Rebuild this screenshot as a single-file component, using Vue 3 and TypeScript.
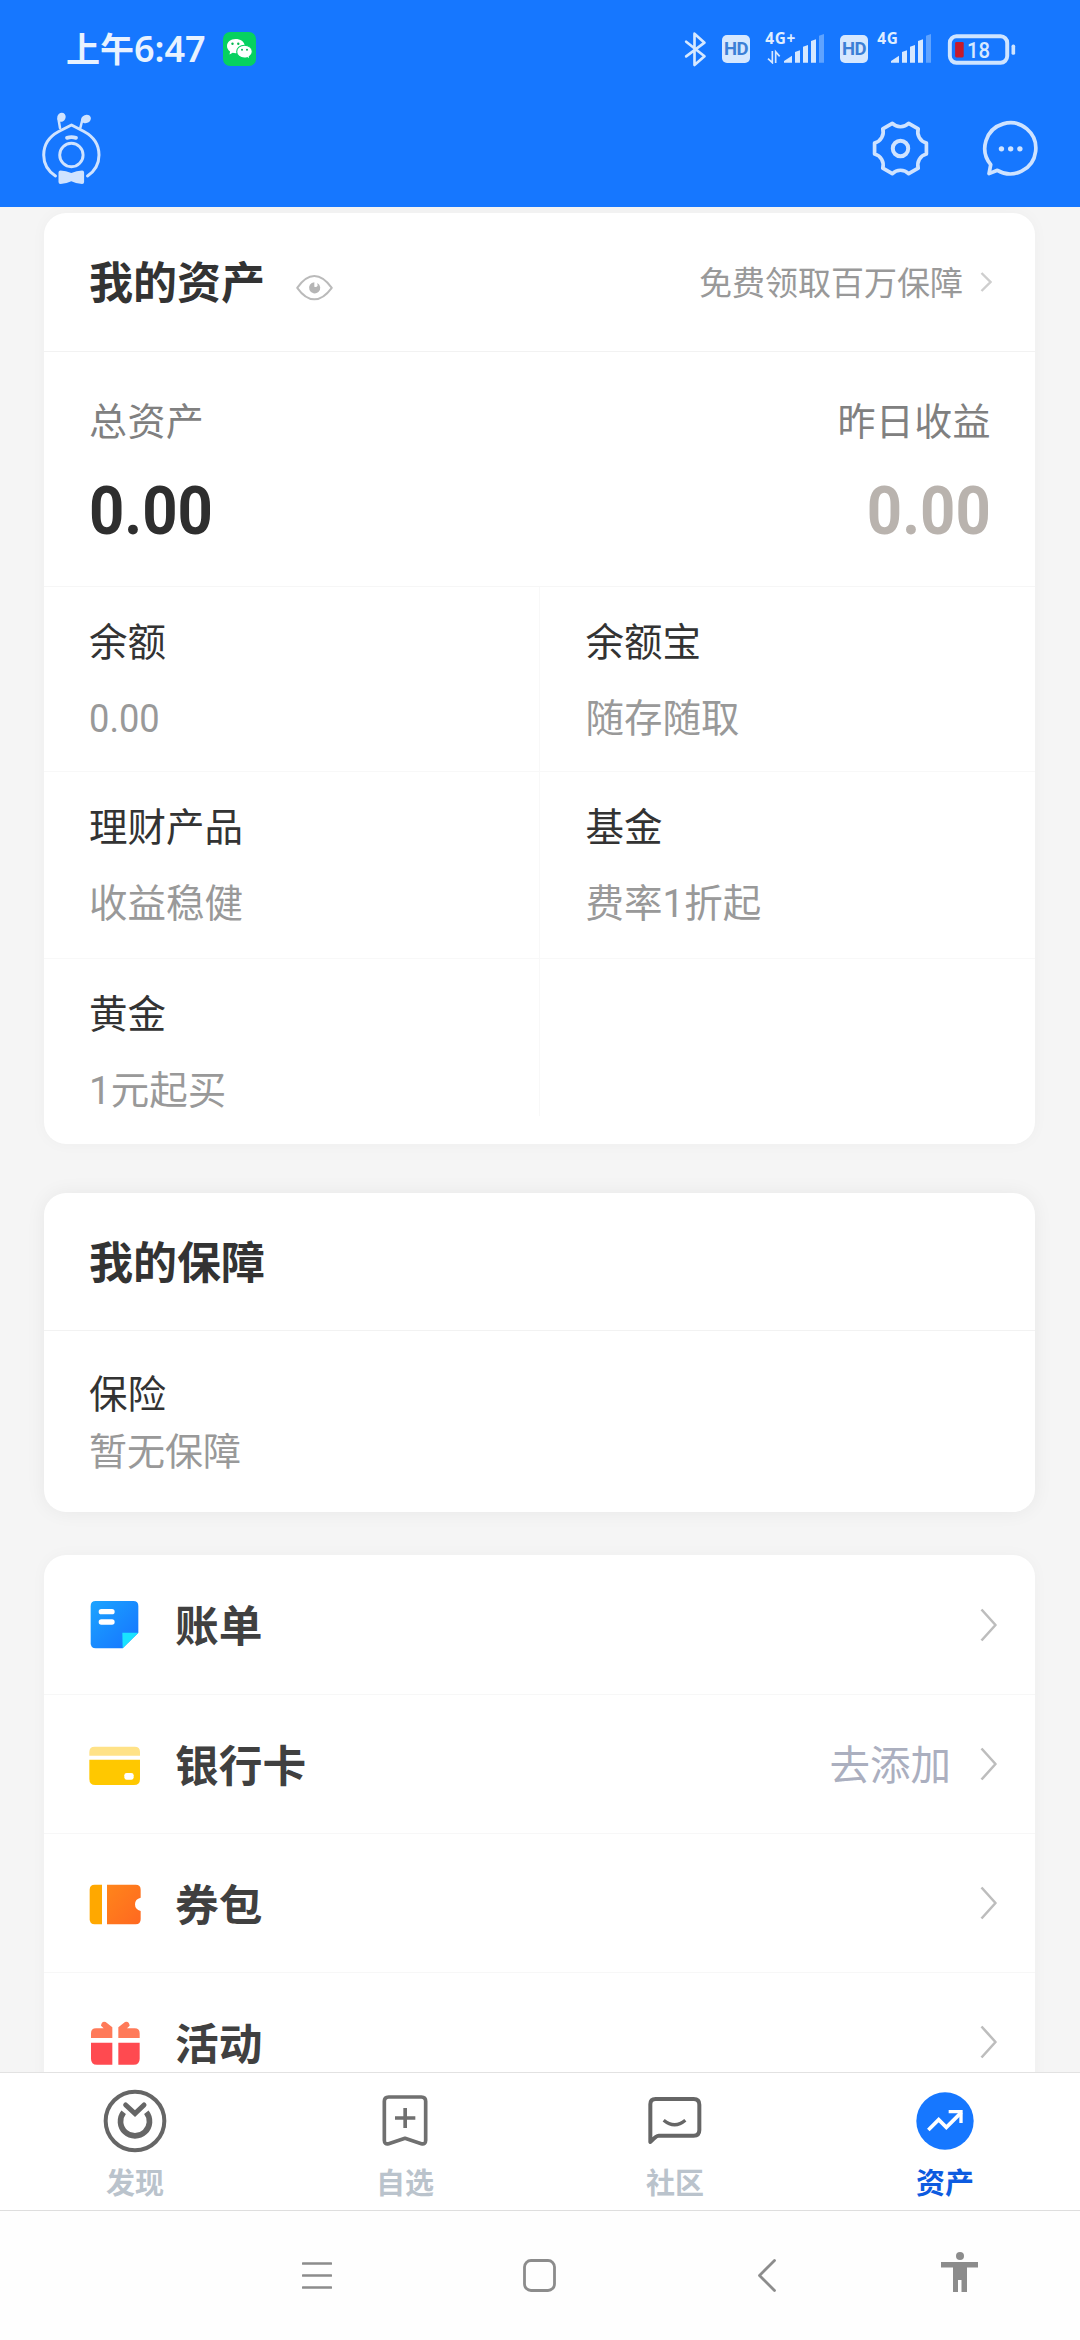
<script setup lang="ts">
interface Asset {
  name: string
  note: string
  numeric?: boolean
}

interface Entry {
  icon: 'bill' | 'card' | 'coupon' | 'gift'
  label: string
  hint?: string
}

interface Tab {
  icon: 'discover' | 'watch' | 'community' | 'assets'
  label: string
  active?: boolean
}

const assetRows: Asset[][] = [
  [{ name: '余额', note: '0.00', numeric: true }, { name: '余额宝', note: '随存随取' }],
  [{ name: '理财产品', note: '收益稳健' }, { name: '基金', note: '费率1折起' }],
  [{ name: '黄金', note: '1元起买' }],
]

const entries: Entry[] = [
  { icon: 'bill', label: '账单' },
  { icon: 'card', label: '银行卡', hint: '去添加' },
  { icon: 'coupon', label: '券包' },
  { icon: 'gift', label: '活动' },
]

const tabs: Tab[] = [
  { icon: 'discover', label: '发现' },
  { icon: 'watch', label: '自选' },
  { icon: 'community', label: '社区' },
  { icon: 'assets', label: '资产', active: true },
]
</script>

<template>
  <div class="screen">
    <header class="header">
      <div class="status">
        <div class="clock"><span class="ampm">上午</span><span class="time">6:47</span></div>
        <svg class="wechat" viewBox="0 0 33 34">
          <rect width="33" height="34" rx="7" fill="#06d160" />
          <path d="M12.500 7C7.600 7 4 10.100 4 14c0 2.300 1.200 4.200 3.100 5.500L6.500 22.500l3.200-1.700c3 .8 6.800.3 9.200-1.600C21.200 17.600 22 15.800 21.800 13.500 21.400 9.700 17.500 7 12.500 7z" fill="#fff" />
          <path d="M21.500 13.300c-4.600 0-7.800 2.800-7.800 6.400s3.300 6.400 7.600 6.400c1.100 0 2-.1 2.900-.4l2.600 1.500-.5-2.500c1.800-1.200 3-2.900 3-5 0-3.600-3.300-6.400-7.800-6.400z" fill="#fff" stroke="#06d160" stroke-width="1.100" />
          <circle cx="9.500" cy="11.700" r="1.200" fill="#06b852" /><circle cx="15.300" cy="11.700" r="1.200" fill="#06b852" />
          <circle cx="19" cy="17.800" r="1" fill="#06b852" /><circle cx="24" cy="17.800" r="1" fill="#06b852" />
        </svg>
        <div class="indicators">
          <svg class="bt" viewBox="136 92 68 108">
            <path d="M142 124l55 44-30 26V100l30 27-55 41" fill="none" stroke="#d6e8ff" stroke-width="8" stroke-linecap="round" stroke-linejoin="round" />
          </svg>
          <span class="hd">HD</span>
          <svg class="signal first" viewBox="378 66 180 126">
            <text x="379" y="132" class="net">4G+</text>
            <g fill="none" stroke="#d6e8ff" stroke-width="5"><path d="M400 153v35l-13-12" /><path d="M410 189v-34l12 14" /></g>
            <path d="M435 188v-5l24-16v21zM468 188v-32l15-5v37zM492 188v-48l15-5v53zM516 188v-65l15-5v70z" fill="#d6e8ff" />
            <path d="M540 188v-81l15-5v86z" fill="#5fa3ff" />
          </svg>
          <span class="hd">HD</span>
          <svg class="signal second" viewBox="714 66 165 126">
            <text x="715" y="132" class="net">4G</text>
            <path d="M756 188v-5l24-16v21zM789 188v-32l15-5v37zM813 188v-48l15-5v53zM837 188v-65l15-5v70z" fill="#d6e8ff" />
            <path d="M861 188v-81l15-5v86z" fill="#5fa3ff" />
          </svg>
          <svg class="battery" viewBox="922 100 208 94">
            <rect x="930" y="107" width="174" height="80" rx="20" fill="none" stroke="#cfe4ff" stroke-width="12" />
            <rect x="1117" y="132" width="11" height="31" rx="5" fill="#cfe4ff" />
            <rect x="946" y="124" width="26" height="47" rx="4" fill="#c61a2b" />
            <text x="982" y="173" textLength="70" lengthAdjust="spacingAndGlyphs" class="charge">18</text>
          </svg>
        </div>
      </div>
      <div class="toolbar">
        <svg class="mascot" viewBox="41 112 61 74" fill="none" stroke="#cfe3ff" stroke-linecap="round" stroke-linejoin="round">
          <path d="M55.500 176C47.800 171 43.700 163.500 43.700 155c0-12 7.600-19.500 15-23.500L71.500 125l12.500 6.500c7.400 4 15 11.500 15 23.500 0 8.500-4.100 16-11.500 21" stroke-width="3" />
          <path d="M60 128l-1.500-9M80.300 128l2-8" stroke-width="2.500" />
          <ellipse cx="61.500" cy="117" rx="4.100" ry="4.600" fill="#cfe3ff" stroke="none" transform="rotate(25 61 117)" />
          <ellipse cx="86" cy="119" rx="5" ry="4.100" fill="#cfe3ff" stroke="none" transform="rotate(-20 86 119)" />
          <path d="M67 137.800q4.500-1.200 9 0" stroke-width="3.800" />
          <circle cx="71.400" cy="155" r="11.700" stroke-width="2.900" />
          <path d="M60.500 170.500q5.500 0 10.800 2.600 5.300-2.600 10.800-2.600 2 0 2 2v9.500q0 2-2 2-5 0-10.800-2.800-5.800 2.800-10.800 2.800-2 0-2-2v-9.500q0-2 2-2z" fill="#cfe3ff" stroke="none" />
        </svg>
        <div class="actions">
          <svg class="gear" viewBox="700 360 170 170" fill="none" stroke="#cfe3ff" stroke-linejoin="round">
            <path stroke-width="11" d="M862.300 461.400A34 34 0 0 0 837.900 503.700L809.400 520.100A34 34 0 0 0 760.600 520.100L732.100 503.700A34 34 0 0 0 707.700 461.400L707.700 428.600A34 34 0 0 0 732.100 386.300L760.600 369.900A34 34 0 0 0 809.400 369.900L837.900 386.300A34 34 0 0 0 862.300 428.600Z" />
            <circle cx="785" cy="445" r="23" stroke-width="12" />
          </svg>
          <svg class="chat" viewBox="1028 359 170 170" fill="none" stroke="#cfe3ff" stroke-linejoin="round">
            <path stroke-width="11" d="M1074 509A76 76 0 1 0 1054 492L1049 519Z" />
            <g fill="#cfe3ff" stroke="none"><circle cx="1086" cy="445" r="8" /><circle cx="1113.500" cy="445" r="8" /><circle cx="1141" cy="445" r="8" /></g>
          </svg>
        </div>
      </div>
    </header>

    <main class="content">
      <section class="card">
        <div class="card-head">
          <h2>我的资产</h2>
          <svg class="eye" viewBox="765 222 117 82">
            <path d="M771 264Q796 228 823 228T876 264Q850 299 823 299T771 264z" fill="none" stroke="#bababa" stroke-width="6" stroke-linejoin="round" />
            <path d="M823 247v14q7 2 10-3l-1-9a17 17 0 1 1-9-2z" fill="#b5b5b5" />
          </svg>
          <span class="promo">免费领取百万保障</span>
          <svg class="mini-arrow" viewBox="0 0 12 20"><path d="M1.500 1l9 9-9 9" fill="none" stroke="#cecece" stroke-width="2.400" /></svg>
        </div>
        <div class="summary">
          <div class="sum-item">
            <span class="sum-label">总资产</span>
            <span class="amount">0.00</span>
          </div>
          <div class="sum-item right">
            <span class="sum-label">昨日收益</span>
            <span class="amount muted">0.00</span>
          </div>
        </div>
        <div v-for="(row, i) in assetRows" :key="i" class="asset-row">
          <div v-for="a in row" :key="a.name" class="asset">
            <span class="asset-name">{{ a.name }}</span>
            <span class="asset-note" :class="{ numeric: a.numeric }">{{ a.note }}</span>
          </div>
        </div>
      </section>

      <section class="card protection">
        <div class="card-head"><h2>我的保障</h2></div>
        <div class="insurance">
          <span class="asset-name">保险</span>
          <span class="asset-note">暂无保障</span>
        </div>
      </section>

      <section class="card entries">
        <div v-for="e in entries" :key="e.icon" class="entry">
          <svg v-if="e.icon === 'bill'" class="entry-icon" viewBox="144 180 162 162">
            <defs>
              <linearGradient id="billFill" x1="0" y1="0" x2="1" y2="1"><stop offset="0" stop-color="#1ba4ff" /><stop offset="1" stop-color="#1673ff" /></linearGradient>
            </defs>
            <path d="M167 186h113q15 0 15 15v80l-47 47h-81q-15 0-15-15V201q0-15 15-15z" fill="url(#billFill)" />
            <path d="M247 281h48l-47 47z" fill="#19e3ff" />
            <path d="M184 218h32M184 249h32" stroke="#fff" stroke-width="16" stroke-linecap="round" />
          </svg>
          <svg v-else-if="e.icon === 'card'" class="entry-icon" viewBox="144 590 162 162">
            <path d="M148 640v-11q0-16 16-16h120q16 0 16 16v11z" fill="#ffe287" />
            <path d="M148 652h152v58q0 18-18 18H166q-18 0-18-18z" fill="#ffc800" />
            <rect x="253" y="692" width="28" height="20" rx="7" fill="#fff" />
          </svg>
          <svg v-else-if="e.icon === 'coupon'" class="entry-icon" viewBox="144 172 162 162">
            <defs>
              <linearGradient id="couponFill" x1="0" y1="0" x2="1" y2="1"><stop offset="0" stop-color="#ff851b" /><stop offset="1" stop-color="#ff6820" /></linearGradient>
            </defs>
            <path d="M186 192v119h-22q-15 0-15-15v-89q0-15 15-15z" fill="#ffa800" />
            <path d="M201 192h86q15 0 15 15v24q-17 4-17 20t17 20v25q0 15-15 15h-86z" fill="url(#couponFill)" />
          </svg>
          <svg v-else class="entry-icon" viewBox="144 589 162 162">
            <path d="M153 652v-14q0-15 15-15h23l-8-8q2-15 14-11l20 16v32zM299 652v-14q0-15-15-15h-23l8-8q-2-15-14-11l-20 16v32z" fill="#ff7a59" />
            <path d="M153 666h64v66h-46q-18 0-18-18zM235 666h64v48q0 18-18 18h-46z" fill="#ff4a50" />
          </svg>
          <span class="entry-label">{{ e.label }}</span>
          <span v-if="e.hint" class="hint">{{ e.hint }}</span>
          <svg class="arrow" viewBox="0 0 17 34"><path d="M1.500 1.500L15.500 17l-14 15.500" fill="none" stroke="#bdbdbd" stroke-width="2.600" stroke-linejoin="round" /></svg>
        </div>
      </section>
    </main>

    <nav class="tabs">
      <div v-for="t in tabs" :key="t.icon" class="tab" :class="{ active: t.active }">
        <svg v-if="t.icon === 'discover'" class="tab-icon" viewBox="130 87 192 192" fill="none" stroke="#666">
          <circle cx="226" cy="183" r="88" stroke-width="12" />
          <path d="M192 157a43.500 43.500 0 1 0 68 0" stroke-width="17" />
          <path d="M198 135l28 26 27-26" stroke-width="15" stroke-linecap="round" />
        </svg>
        <svg v-else-if="t.icon === 'watch'" class="tab-icon" viewBox="941 87 192 192" fill="none" stroke="#707070">
          <path d="M988 111h98q13 0 13 13v117q0 13-13 10l-49-16-49 16q-13 3-13-10V124q0-13 13-13z" stroke-width="11" stroke-linejoin="round" />
          <path d="M1007 174h61M1037.500 144v60" stroke-width="11" />
        </svg>
        <svg v-else-if="t.icon === 'community'" class="tab-icon" viewBox="130 87 192 192" fill="none" stroke="#666">
          <path d="M152 246V133q0-16 16-16h114q17 0 17 17v76q0 17-17 17H177q-8 0-25 19z" stroke-width="12" stroke-linejoin="round" />
          <path d="M192 181q33 27 65 0" stroke-width="10" />
        </svg>
        <svg v-else class="tab-icon" viewBox="940 87 192 192">
          <circle cx="1036" cy="183" r="86" fill="#1677ff" />
          <path d="M986 210l31-31 23 23 45-45" fill="none" stroke="#fff" stroke-width="11" />
          <path d="M1047 155h37v34" fill="none" stroke="#fff" stroke-width="10" />
        </svg>
        <span class="tab-label">{{ t.label }}</span>
      </div>
    </nav>

    <footer class="system-nav">
      <svg class="menu" viewBox="0 0 30 28"><path d="M1 2.500h28M1 14.500h28M1 26.500h28" stroke="#8c8c8c" stroke-width="2.700" stroke-linecap="round" /></svg>
      <svg class="home" viewBox="0 0 33 33"><rect x="1.500" y="1.500" width="30" height="30" rx="6.500" fill="none" stroke="#8c8c8c" stroke-width="2.800" /></svg>
      <svg class="back" viewBox="0 0 18 33"><path d="M16.500 1.500l-15 15 15 15" fill="none" stroke="#8c8c8c" stroke-width="2.800" stroke-linecap="round" stroke-linejoin="round" /></svg>
      <svg class="person" viewBox="0 0 37 40"><circle cx="19" cy="4" r="4" fill="#8c8c8c" /><path d="M0 10h37v5.500H26V40h-5.500V28H17v12h-5V15.500H0z" fill="#8c8c8c" /></svg>
    </footer>
  </div>
</template>

<style>
body {
  margin: 0;
  overflow: hidden;
}
</style>

<style scoped>
.screen {
  display: flex;
  flex-direction: column;
  width: 1080px;
  height: 2340px;
  overflow: hidden;
  background: #f5f5f5;
  color: #333;
  font-family: Roboto, "Noto Sans CJK SC", sans-serif;
}
svg {
  display: block;
  flex: none;
}
span {
  white-space: nowrap;
}
.header {
  flex: none;
  height: 207px;
  background: #1677ff;
}
.status {
  display: flex;
  align-items: center;
  height: 98px;
  padding: 0 64px 0 66px;
}
.clock {
  display: flex;
  width: 157px;
  align-items: center;
  color: #e8f2ff;
  line-height: 44px;
}
.ampm {
  padding-top: 2px;
  font-size: 34px;
  font-weight: 700;
}
.time {
  font-family: "Noto Sans", sans-serif;
  font-size: 36px;
  font-weight: 600;
}
.wechat {
  width: 33px;
  height: 34px;
}
.indicators {
  display: flex;
  align-items: center;
  margin-left: auto;
}
.bt {
  width: 23px;
  height: 36px;
}
.hd {
  width: 28px;
  height: 28px;
  margin-left: 15px;
  border-radius: 5px;
  background: #d6e8ff;
  color: #3c7fd6;
  font: 700 18.5px/29px Roboto, sans-serif;
  letter-spacing: -0.6px;
  text-align: center;
}
.signal {
  height: 42px;
  margin-top: -12px;
}
.first {
  width: 60px;
  margin-left: 15px;
}
.second {
  width: 55px;
  margin-left: 9px;
}
.net {
  font: 700 46px "Open Sans", sans-serif;
  letter-spacing: 2px;
  fill: #e0eeff;
}
.battery {
  width: 69px;
  height: 31px;
  margin-left: 15px;
}
.charge {
  font: 500 67px Roboto, sans-serif;
  fill: #d6e8ff;
}
.toolbar {
  display: flex;
  justify-content: space-between;
  padding: 14px 41px 0 41px;
}
.mascot {
  width: 61px;
  height: 74px;
}
.actions {
  display: flex;
  gap: 53px;
  padding-top: 8px;
}
.gear,
.chat {
  width: 57px;
  height: 57px;
}

.content {
  flex: none;
  height: 1859px;
  padding: 6px 45px 0 44px;
  overflow: hidden;
}
.card {
  border-radius: 22px;
  background: #fff;
  box-shadow: 0 0 16px rgba(0, 0, 0, 0.03);
}
.card-head {
  box-sizing: border-box;
  display: flex;
  align-items: center;
  height: 139px;
  padding: 4px 43px 0 45px;
  border-bottom: 1px solid #f2f2f2;
}
h2 {
  margin: 0;
  font-size: 44px;
  line-height: 60px;
  font-weight: 700;
}
.eye {
  width: 39px;
  height: 27px;
  margin: 7px 0 0 30px;
}
.promo {
  margin-left: auto;
  color: #999;
  font-size: 33px;
  line-height: 46px;
}
.mini-arrow {
  width: 12px;
  height: 20px;
  margin: -4px 0 0 17px;
}
.summary {
  box-sizing: border-box;
  display: flex;
  justify-content: space-between;
  height: 235px;
  padding: 45px 44px 0 45px;
  border-bottom: 1px solid #f6f6f6;
}
.sum-item {
  display: flex;
  flex-direction: column;
  align-items: flex-start;
}
.right {
  align-items: flex-end;
}
.sum-label {
  color: #808080;
  font-size: 38px;
  line-height: 50px;
  letter-spacing: 0.4px;
}
.amount {
  margin-top: 24px;
  color: #2e2e2e;
  font-size: 67px;
  font-weight: 700;
  line-height: 80px;
  transform: scaleX(0.92);
  transform-origin: left;
}
.muted {
  color: #b9b3ae;
  transform-origin: right;
}
.asset-row {
  box-sizing: border-box;
  display: flex;
  height: 187px;
  border-bottom: 1px solid #f8f8f8;
}
.asset-row:nth-child(3) {
  height: 185px;
}
.asset-row:last-child {
  height: 185px;
  border: 0;
}
.asset {
  box-sizing: border-box;
  display: flex;
  flex-direction: column;
  align-items: flex-start;
  width: 496px;
  padding: 32px 0 0 45px;
}
.asset:first-child {
  border-right: 1px solid #f8f8f8;
}
.asset:nth-child(2) {
  padding-left: 46px;
}
.asset-row:last-child .asset {
  height: 157px;
}
.asset-name {
  font-size: 38.5px;
  line-height: 48px;
}
.asset-note {
  margin-top: 28px;
  color: #999;
  font-size: 38.5px;
  line-height: 48px;
}
.numeric {
  font-size: 39px;
  transform: scaleX(0.93);
  transform-origin: left;
}
.protection {
  margin-top: 49px;
  box-shadow: 0 0 20px rgba(0, 0, 0, 0.06);
}
.protection .card-head {
  height: 138px;
}
.insurance {
  box-sizing: border-box;
  display: flex;
  flex-direction: column;
  height: 181px;
  padding: 40px 45px 0;
}
.insurance .asset-note {
  margin-top: 9px;
  font-size: 38px;
}
.entries {
  margin-top: 43px;
}
.entry {
  box-sizing: border-box;
  display: flex;
  align-items: center;
  height: 139px;
  padding: 0 38px 0 44px;
  border-bottom: 1px solid #f7f7f7;
}
.entry:first-child {
  height: 140px;
}
.entry-icon {
  width: 54px;
  height: 54px;
  margin-top: 3px;
}
.entry-label {
  margin-left: 33px;
  padding-top: 5px;
  color: #404040;
  font-size: 43.7px;
  font-weight: 700;
  line-height: 60px;
}
.hint {
  margin-left: auto;
  padding-top: 3px;
  color: #abafbf;
  font-size: 40.5px;
  line-height: 60px;
}
.arrow {
  width: 17px;
  height: 34px;
  margin-left: auto;
}
.hint + .arrow {
  margin-left: 29px;
}

.tabs {
  box-sizing: border-box;
  flex: none;
  display: flex;
  height: 138px;
  border-top: 1px solid #e2e2e2;
  background: #fff;
}
.tab {
  display: flex;
  flex: 1;
  flex-direction: column;
  align-items: center;
  padding-top: 16px;
}
.tab-icon {
  width: 64px;
  height: 64px;
}
.tab-label {
  margin-top: 12px;
  color: #bac3cc;
  font-size: 29px;
  font-weight: 700;
  line-height: 38px;
}
.active .tab-label {
  color: #0d5be0;
}
.system-nav {
  box-sizing: border-box;
  flex: 1;
  display: flex;
  align-items: flex-start;
  padding: 48px 0 0 302px;
  border-top: 1px solid #dedede;
  background: #fefefe;
}
.menu {
  width: 30px;
  height: 28px;
  margin-top: 2px;
}
.home {
  width: 33px;
  height: 33px;
  margin-left: 191px;
}
.back {
  width: 18px;
  height: 33px;
  margin-left: 202px;
}
.person {
  width: 37px;
  height: 40px;
  margin: -7px 0 0 165px;
}
</style>
